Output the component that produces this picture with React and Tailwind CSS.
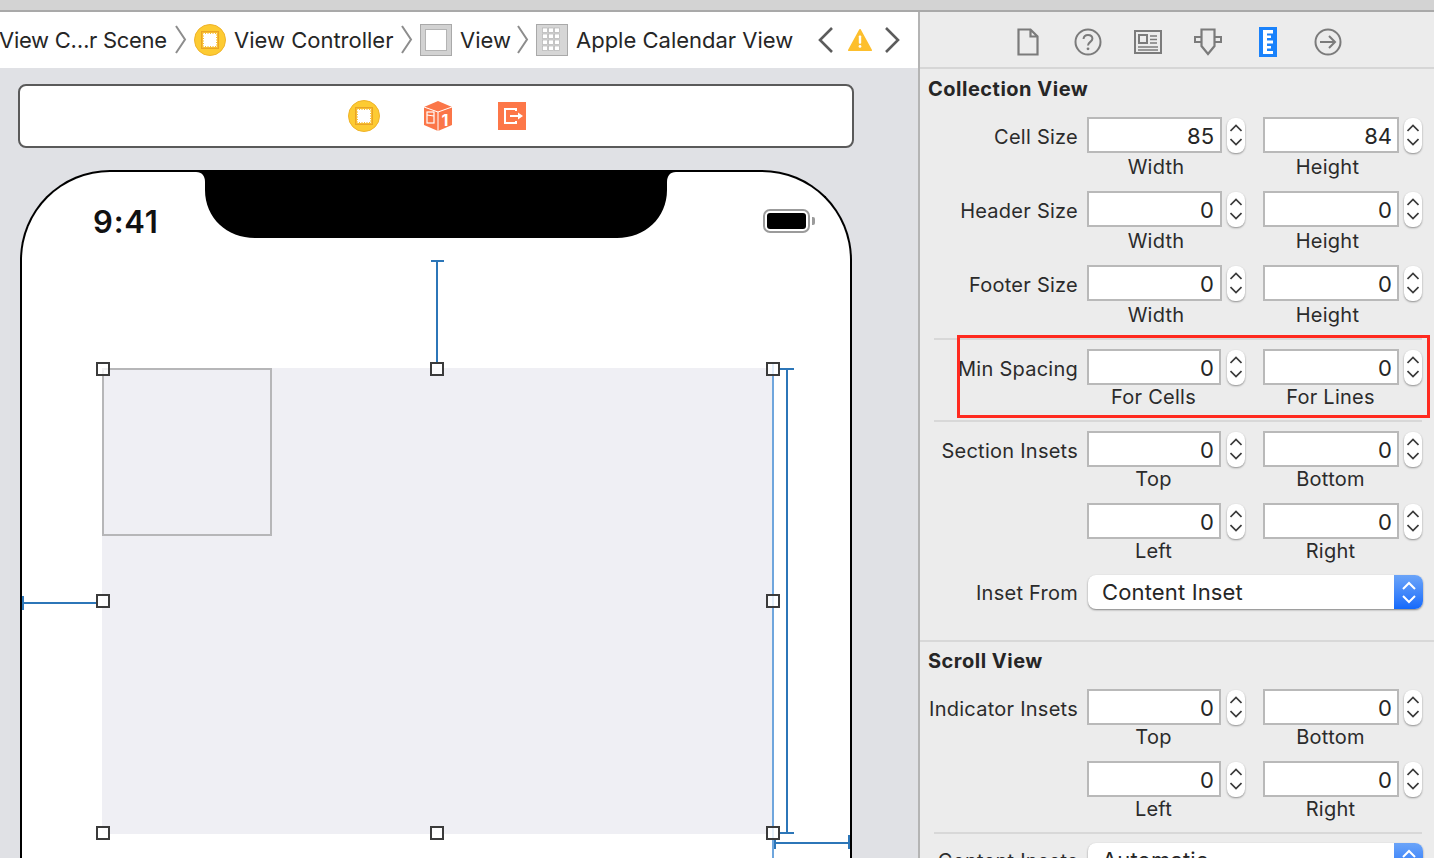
import React from 'react';

const Chevron = () => (
  <svg width="12" height="30" viewBox="0 0 12 30" className="shrink-0">
    <polyline points="1,1 10,14.5 1,28" fill="none" stroke="#8d8d8d" strokeWidth="2" />
  </svg>
);

const VcIcon = () => (
  <svg width="32" height="32" viewBox="0 0 32 32" className="shrink-0">
    <circle cx="16" cy="16" r="15.5" fill="#fdcb32" stroke="#efb32a" />
    <rect x="7.5" y="7.5" width="17" height="17" fill="#f6bc32" stroke="#eaa526" />
    <rect x="10" y="10" width="12" height="12" fill="#fff" />
    <rect x="9.5" y="9.5" width="13" height="13" fill="none" stroke="#fff" strokeDasharray="1.5 1" />
  </svg>
);

const ViewIcon = () => (
  <svg width="32" height="32" viewBox="0 0 32 32" className="shrink-0">
    <rect x="0.5" y="0.5" width="31" height="31" fill="#d2d2d2" stroke="#a9a9a9" />
    <rect x="5.5" y="5.5" width="21" height="21" fill="#fff" stroke="#b4b4b4" />
  </svg>
);

const GridIcon = () => (
  <svg width="32" height="32" viewBox="0 0 32 32" className="shrink-0">
    <rect x="0.5" y="0.5" width="31" height="31" fill="#d6d6d6" stroke="#a9a9a9" />
    {[4, 10, 16, 22].map((y) =>
      [6.5, 12.5, 18.5].map((x) => (
        <rect key={`${x}-${y}`} x={x} y={y} width="5" height="4.5" fill="#fff" stroke="#b4b4b4" strokeWidth="0.7" />
      ))
    )}
  </svg>
);

const CubeIcon = () => (
  <svg width="28" height="30" viewBox="0 0 28 30">
    <polygon points="14,0 28,6 28,24 14,30 0,24 0,6" fill="#fb7648" />
    <polyline points="0,6 14,11 28,6" fill="none" stroke="#fff" strokeWidth="1" />
    <line x1="14" y1="11" x2="14" y2="30" stroke="#fff" strokeWidth="1" />
    <rect x="3" y="11" width="7" height="11" fill="none" stroke="#fff" strokeWidth="1.2" />
    <line x1="3" y1="14" x2="10" y2="15" stroke="#fff" strokeWidth="1" />
    <text x="21" y="25" textAnchor="middle" fontSize="16" fontWeight="700" fill="#fff" fontFamily="Inter, sans-serif">1</text>
  </svg>
);

const ExitIcon = () => (
  <svg width="28" height="28" viewBox="0 0 28 28">
    <rect width="28" height="28" fill="#fd7748" />
    <polyline points="18,9 18,7 7,7 7,21 18,21 18,19" fill="none" stroke="#fff" strokeWidth="2" />
    <line x1="12" y1="14" x2="22" y2="14" stroke="#fff" strokeWidth="2" />
    <polygon points="20,10.5 25,14 20,17.5" fill="#fff" />
  </svg>
);

const Stepper = () => (
  <div className="flex h-[35px] w-[18px] flex-col items-center justify-center gap-[6px] rounded-[8px] bg-white shadow-[0_1px_2px_rgba(0,0,0,0.4)]">
    <svg width="12" height="8" viewBox="0 0 12 8">
      <polyline points="0.5,7 6,1.5 11.5,7" fill="none" stroke="#3a3a3a" strokeWidth="1.7" />
    </svg>
    <svg width="12" height="8" viewBox="0 0 12 8">
      <polyline points="0.5,1 6,6.5 11.5,1" fill="none" stroke="#3a3a3a" strokeWidth="1.7" />
    </svg>
  </div>
);

const Field = ({ value, width, pad }) => (
  <div className={`flex h-[36px] items-center justify-end border-2 border-[#b9b9b9] bg-white pt-[2px] text-[22px] leading-none text-[#262626] ${pad} ${width}`}>
    {value}
  </div>
);

// one label + two number fields + captions
const FieldRow = ({ label, a, b, capA, capB, height, capHeight, capAClass = 'pr-[2px]', capBClass = 'pr-[1px]', firstWidth = 'w-[134px]', firstPad = 'pr-[5px]' }) => (
  <div className={height}>
    <div className="flex items-center">
      <div className="w-[158px] shrink-0 pt-[3px] text-right text-[20px] tracking-[0.25px] text-[#2b2b2b]">{label}</div>
      <div className="ml-[9px] w-[135px] shrink-0"><Field value={a} width={firstWidth} pad={firstPad} /></div>
      <div className="ml-[5px]"><Stepper /></div>
      <div className="ml-[18px]"><Field value={b} width="w-[136px]" pad="pr-[5px]" /></div>
      <div className="ml-[5px]"><Stepper /></div>
    </div>
    <div className={`flex text-[20px] tracking-[0.25px] text-[#2b2b2b] ${capHeight}`}>
      <div className={`ml-[167px] flex w-[135px] items-center justify-center ${capAClass}`}>{capA}</div>
      <div className={`ml-[41px] flex w-[136px] items-center justify-center ${capBClass}`}>{capB}</div>
    </div>
  </div>
);

const SelectRow = ({ label, value }) => (
  <div className="flex items-center">
    <div className="w-[158px] shrink-0 pt-[2px] text-right text-[20px] tracking-[0.25px] text-[#2b2b2b]">{label}</div>
    <div className="ml-[10px] flex h-[34px] w-[335px] items-center justify-between overflow-hidden rounded-[8px] bg-white shadow-[0_1px_2px_rgba(0,0,0,0.45)]">
      <span className="pl-[14px] text-[22px] tracking-[0.15px] text-[#262626]">{value}</span>
      <div className="flex h-full w-[29px] flex-col items-center justify-center gap-[3px] bg-gradient-to-b from-[#6ba4f8] to-[#1269fb]">
        <svg width="16" height="10" viewBox="0 0 16 10">
          <polyline points="2,8 8,2 14,8" fill="none" stroke="#fff" strokeWidth="2" />
        </svg>
        <svg width="16" height="10" viewBox="0 0 16 10">
          <polyline points="2,2 8,8 14,2" fill="none" stroke="#fff" strokeWidth="2" />
        </svg>
      </div>
    </div>
  </div>
);

const Tab = ({ children }) => <div className="flex w-[60px] items-center justify-center">{children}</div>;

const tabStroke = '#7b7b7b';

const InspectorTabs = () => (
  <div className="flex h-[57px] items-center justify-center border-b-2 border-[#d6d6d6] pl-[2px] pt-[5px]">
    <Tab>
      <svg width="22" height="28" viewBox="0 0 22 28">
        <path d="M1.5 1.5H13.5L20.5 8.5V26.5H1.5Z M13.5 1.5V8.5H20.5" fill="none" stroke={tabStroke} strokeWidth="2.2" />
      </svg>
    </Tab>
    <Tab>
      <svg width="28" height="28" viewBox="0 0 28 28">
        <circle cx="14" cy="14" r="12.5" fill="none" stroke={tabStroke} strokeWidth="2" />
        <path d="M9.5 11C9.8 8.2 11.6 7 14 7C16.6 7 18.4 8.6 18.4 10.7C18.4 13.8 14 14 14 17.5" fill="none" stroke={tabStroke} strokeWidth="2" />
        <circle cx="14" cy="20.8" r="1.4" fill={tabStroke} />
      </svg>
    </Tab>
    <Tab>
      <svg width="28" height="24" viewBox="0 0 28 24">
        <rect x="1" y="1" width="26" height="22" fill="none" stroke={tabStroke} strokeWidth="2" />
        <rect x="5" y="5" width="8" height="8" fill="none" stroke={tabStroke} strokeWidth="2" />
        <path d="M16 6H23M16 9.5H23M16 13H23M4 17H24M4 20H24" stroke={tabStroke} strokeWidth="1.6" />
      </svg>
    </Tab>
    <Tab>
      <svg width="28" height="28" viewBox="0 0 28 28">
        <path d="M7.5 1.5H20.5V18L14 26L7.5 18Z" fill="none" stroke={tabStroke} strokeWidth="2.2" />
        <path d="M7.5 9H1V14H7.5M20.5 9H27V14H20.5" fill="none" stroke={tabStroke} strokeWidth="2" />
      </svg>
    </Tab>
    <Tab>
      <svg width="18" height="30" viewBox="0 0 18 30">
        <rect width="18" height="30" fill="#1a82fb" />
        <path d="M4 3H14V6.5H8V8.5H12V11H8V13.5H14V16.5H8V19H12V21.5H8V24H14V27H4Z" fill="#fff" />
      </svg>
    </Tab>
    <Tab>
      <svg width="28" height="28" viewBox="0 0 28 28">
        <circle cx="14" cy="14" r="12.5" fill="none" stroke={tabStroke} strokeWidth="2" />
        <path d="M6 14H21M15 8L21 14L15 20" fill="none" stroke={tabStroke} strokeWidth="2" />
      </svg>
    </Tab>
  </div>
);

const Inspector = () => (
  <div className="relative h-full w-[514px] shrink-0 overflow-hidden bg-[#ececec]">
    <InspectorTabs />
    <div className="flex h-[40px] items-center pl-[8px] text-[20px] font-bold tracking-[0.5px] text-[#262626]">Collection View</div>
    <div className="pt-[8px]">
      <FieldRow label="Cell Size" a="85" b="84" capA="Width" capB="Height" height="h-[74px]" capHeight="h-[28px]" capAClass="pl-[3px]" capBClass="pr-[7px]" firstWidth="w-[135px]" firstPad="pr-[6px]" />
      <FieldRow label="Header Size" a="0" b="0" capA="Width" capB="Height" height="h-[74px]" capHeight="h-[28px]" capAClass="pl-[3px]" capBClass="pr-[7px]" firstWidth="w-[135px]" firstPad="pr-[6px]" />
      <FieldRow label="Footer Size" a="0" b="0" capA="Width" capB="Height" height="h-[73px]" capHeight="h-[28px]" capAClass="pl-[3px]" capBClass="pr-[7px]" firstWidth="w-[135px]" firstPad="pr-[6px]" />
    </div>
    <div className="ml-[14px] mr-[12px] h-[2px] bg-[#d8d8d8]" />
    <div className="pt-[9px]">
      <FieldRow label="Min Spacing" a="0" b="0" capA="For Cells" capB="For Lines" height="h-[71px]" capHeight="h-[24px]" />
    </div>
    <div className="ml-[14px] mr-[12px] h-[2px] bg-[#d8d8d8]" />
    <div className="pt-[9px]">
      <FieldRow label="Section Insets" a="0" b="0" capA="Top" capB="Bottom" height="h-[72px]" capHeight="h-[24px]" />
      <FieldRow label="" a="0" b="0" capA="Left" capB="Right" height="h-[72px]" capHeight="h-[24px]" />
      <SelectRow label="Inset From" value="Content Inset" />
    </div>
    <div className="mt-[31px] h-[2px] bg-[#d8d8d8]" />
    <div className="flex h-[38px] items-center pl-[8px] text-[20px] font-bold tracking-[0.5px] text-[#262626]">Scroll View</div>
    <div className="pt-[9px]">
      <FieldRow label="Indicator Insets" a="0" b="0" capA="Top" capB="Bottom" height="h-[72px]" capHeight="h-[24px]" />
      <FieldRow label="" a="0" b="0" capA="Left" capB="Right" height="h-[71px]" capHeight="h-[24px]" />
    </div>
    <div className="ml-[14px] mr-[12px] h-[2px] bg-[#d8d8d8]" />
    <div className="pt-[9px]">
      <SelectRow label="Content Insets" value="Automatic" />
    </div>
    {/* red annotation box drawn over the screenshot */}
    <div className="absolute left-[37px] top-[323px] h-[83px] w-[473px] border-[3px] border-[#ff2a1f]" />
  </div>
);

const Breadcrumb = () => (
  <div className="flex h-[56px] shrink-0 items-center overflow-hidden whitespace-nowrap bg-white text-[22px] text-[#262626]">
    <span className="ml-[-1px] w-[169px] shrink-0 tracking-[-0.3px]">View C…r Scene</span>
    <div className="ml-[7px]"><Chevron /></div>
    <div className="ml-[7px]"><VcIcon /></div>
    <span className="ml-[8px] w-[160px] shrink-0">View Controller</span>
    <div className="ml-[7px]"><Chevron /></div>
    <div className="ml-[7px]"><ViewIcon /></div>
    <span className="ml-[8px] w-[50px] shrink-0">View</span>
    <div className="ml-[7px]"><Chevron /></div>
    <div className="ml-[7px]"><GridIcon /></div>
    <span className="ml-[8px] w-[217px] shrink-0">Apple Calendar View</span>
    <svg width="16" height="28" viewBox="0 0 16 28" className="ml-[25px] shrink-0">
      <polyline points="14,2 2,14 14,26" fill="none" stroke="#5c5c5c" strokeWidth="2.6" />
    </svg>
    <svg width="24" height="24" viewBox="0 0 26 26" className="ml-[14px] shrink-0">
      <path d="M13 2L25 24H1Z" fill="#fdbf2d" stroke="#fdbf2d" strokeWidth="2" strokeLinejoin="round" />
      <rect x="11.7" y="8" width="2.6" height="9" rx="1" fill="#fff" />
      <circle cx="13" cy="20" r="1.5" fill="#fff" />
    </svg>
    <svg width="16" height="28" viewBox="0 0 16 28" className="ml-[12px] shrink-0">
      <polyline points="2,2 14,14 2,26" fill="none" stroke="#5c5c5c" strokeWidth="2.6" />
    </svg>
  </div>
);

const handles = [
  [81, 197], [415, 197], [751, 197],
  [81, 429], [751, 429],
  [81, 661], [415, 661], [751, 661],
];

// device frame on the storyboard canvas, items keep their canvas coordinates
const Phone = () => (
  <div className="relative ml-[20px] mt-[22px] h-[720px] w-[832px] shrink-0 rounded-t-[90px] border-x-2 border-t-2 border-black bg-white">
    <svg width="832" height="70" viewBox="0 0 832 70" className="absolute left-[-2px] top-[-2px]">
      <path d="M176 0H656V2C650 2 647 6 647 12V20C647 48 625 68 597 68H235C207 68 185 48 185 20V12C185 6 182 2 176 2Z" fill="#000" />
    </svg>
    <div className="absolute left-[71px] top-[30px] text-[31px] font-semibold leading-[40px] tracking-[0.8px] text-[#111]">9:41</div>
    <div className="absolute left-[741px] top-[37px] flex items-center gap-[2px]">
      <div className="h-[24px] w-[47px] rounded-[7px] border-[2px] border-[#9b9b9b] bg-white p-[2px]">
        <div className="h-full w-full rounded-[3px] bg-black" />
      </div>
      <div className="h-[8px] w-[3px] rounded-r-[2px] bg-[#9b9b9b]" />
    </div>

    {/* collection view */}
    <div className="absolute left-[80px] top-[196px] h-[466px] w-[671px] bg-[#efeff4]">
      <div className="h-[168px] w-[170px] border-2 border-[#b6b6b8]" />
    </div>

    {/* constraints */}
    <div className="absolute left-[414px] top-[89px] h-[102px] w-[2px] bg-[#2c76b8]" />
    <div className="absolute left-[409px] top-[88px] h-[2px] w-[13px] bg-[#2c76b8]" />
    <div className="absolute left-[0px] top-[430px] h-[2px] w-[76px] bg-[#2c76b8]" />
    <div className="absolute left-[0px] top-[424px] h-[14px] w-[2px] bg-[#2c76b8]" />
    <div className="absolute left-[750px] top-[190px] h-[530px] w-[2px] bg-[#6fa6dd]" />
    <div className="absolute left-[764px] top-[197px] h-[464px] w-[2px] bg-[#2c76b8]" />
    <div className="absolute left-[757px] top-[196px] h-[2px] w-[15px] bg-[#2c76b8]" />
    <div className="absolute left-[757px] top-[660px] h-[2px] w-[15px] bg-[#2c76b8]" />
    <div className="absolute left-[753px] top-[670px] h-[2px] w-[75px] bg-[#2c76b8]" />
    <div className="absolute left-[752px] top-[667px] h-[10px] w-[2px] bg-[#2c76b8]" />
    <div className="absolute left-[826px] top-[663px] h-[14px] w-[2px] bg-[#2c76b8]" />

    {handles.map(([x, y]) => (
      <div
        key={`${x}-${y}`}
        className="absolute h-[14px] w-[14px] border-2 border-[#3b3b3b] bg-white/80"
        style={{ left: x - 7, top: y - 7 }}
      />
    ))}
  </div>
);

export default function App() {
  return (
    <div className="h-[858px] w-[1434px] overflow-hidden bg-[#e0e1e5] font-['Inter',sans-serif]">
      <div className="h-[12px] border-b-2 border-[#a9a9a9] bg-[#d3d3d3]" />
      <div className="flex h-[846px]">
        <div className="flex w-[918px] shrink-0 flex-col overflow-hidden">
          <Breadcrumb />
          <div className="ml-[18px] mt-[16px] flex h-[64px] w-[836px] shrink-0 items-center justify-center rounded-[8px] border-2 border-[#5a5a5a] bg-white pl-[4px]">
            <div className="flex w-[74px] justify-center"><VcIcon /></div>
            <div className="flex w-[74px] justify-center"><CubeIcon /></div>
            <div className="flex w-[74px] justify-center"><ExitIcon /></div>
          </div>
          <Phone />
        </div>
        <div className="w-[2px] shrink-0 bg-[#b4b4b4]" />
        <Inspector />
      </div>
    </div>
  );
}
